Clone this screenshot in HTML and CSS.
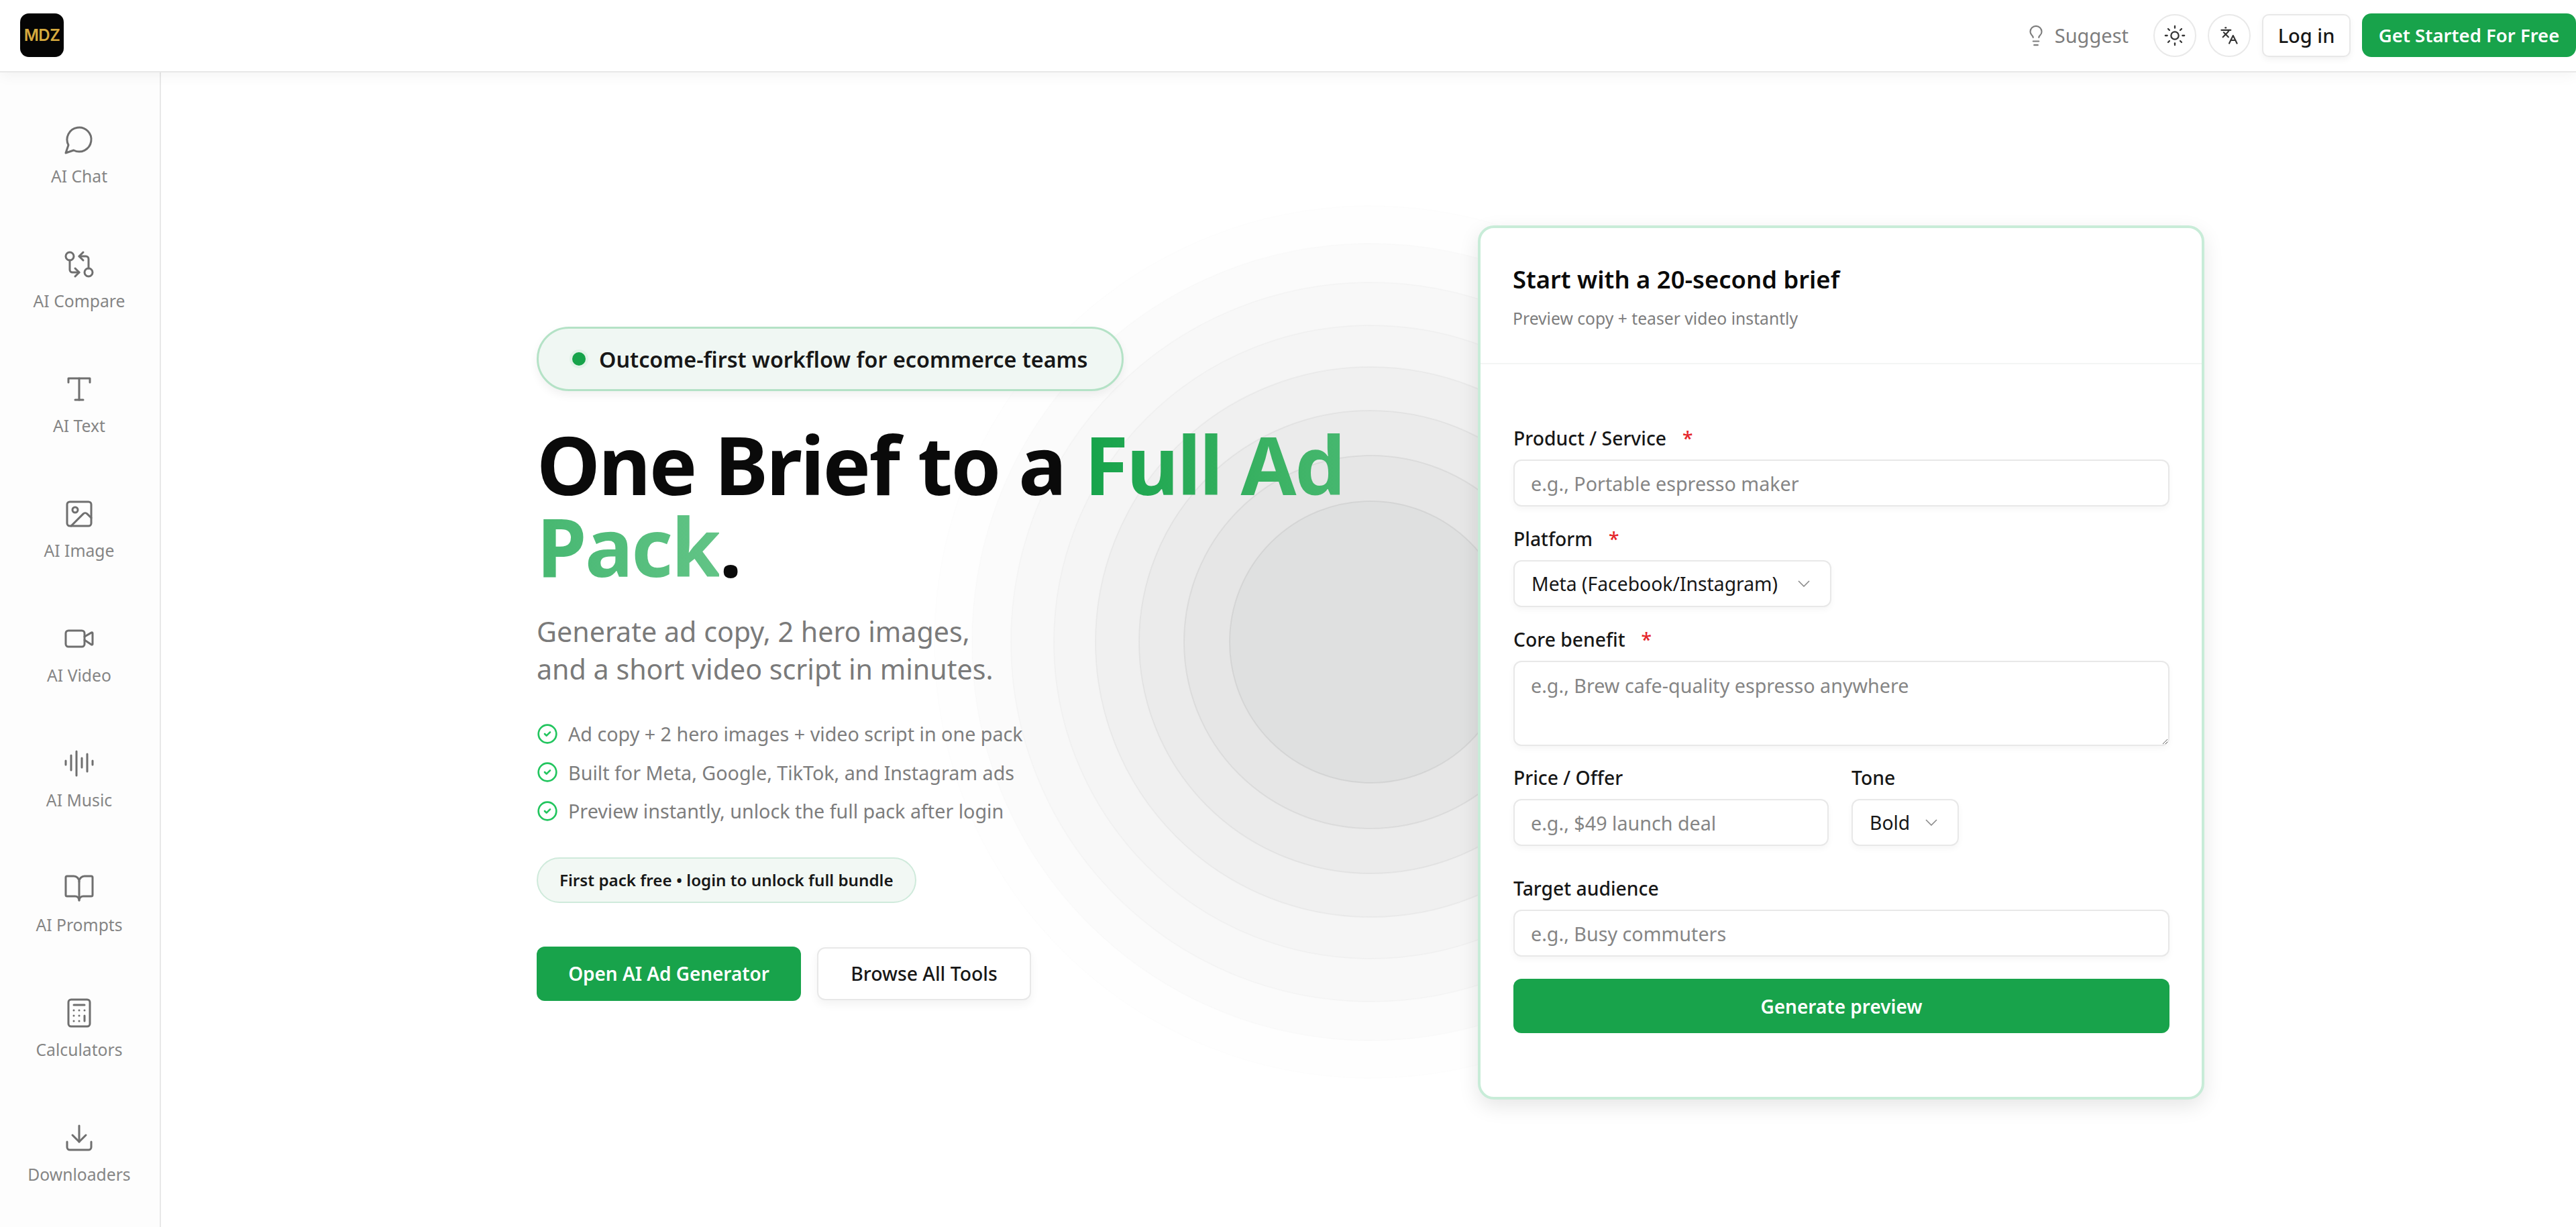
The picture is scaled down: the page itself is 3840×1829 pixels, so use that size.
FILE: index.html
```html
<!DOCTYPE html>
<html lang="en">
<head>
<meta charset="utf-8">
<title>One Brief to a Full Ad Pack</title>
<link rel="stylesheet" href="styles.css">
</head>
<body>
<header class="topbar">
  <div class="logo">MDZ</div>
  <div class="top-actions">
    <a class="suggest">
      <svg class="ic ic-bulb" viewBox="0 0 24 24"><path d="M15 14c.2-1 .7-1.7 1.5-2.5 1-.9 1.5-2.2 1.5-3.5A6 6 0 0 0 6 8c0 1 .2 2.2 1.5 3.5.7.7 1.3 1.5 1.5 2.5"/><path d="M9 18h6"/><path d="M10 22h4"/></svg>
      <span>Suggest</span>
    </a>
    <button class="round">
      <svg class="ic ic-sun" viewBox="0 0 24 24"><circle cx="12" cy="12" r="4"/><path d="M12 2v2"/><path d="M12 20v2"/><path d="m4.93 4.93 1.41 1.41"/><path d="m17.66 17.66 1.41 1.41"/><path d="M2 12h2"/><path d="M20 12h2"/><path d="m6.34 17.66-1.41 1.41"/><path d="m19.07 4.93-1.41 1.41"/></svg>
    </button>
    <button class="round">
      <svg class="ic ic-lang" viewBox="0 0 24 24"><path d="m5 8 6 6"/><path d="m4 14 6-6 2-3"/><path d="M2 5h12"/><path d="M7 2h1"/><path d="m22 22-5-10-5 10"/><path d="M14 18h6"/></svg>
    </button>
    <button class="btn-login">Log in</button>
    <button class="btn-start">Get Started For Free</button>
  </div>
</header>

<div class="shell">
  <nav class="sidebar">
    <a class="nav-item"><svg class="ic" viewBox="0 0 24 24"><path d="M7.9 20A9 9 0 1 0 4 16.1L2 22Z"/></svg><span>AI Chat</span></a>
    <a class="nav-item"><svg class="ic" viewBox="0 0 24 24"><circle cx="5" cy="6" r="3"/><path d="M12 6h5a2 2 0 0 1 2 2v7"/><path d="m15 9-3-3 3-3"/><circle cx="19" cy="18" r="3"/><path d="M12 18H7a2 2 0 0 1-2-2V9"/><path d="m9 15 3 3-3 3"/></svg><span>AI Compare</span></a>
    <a class="nav-item"><svg class="ic" viewBox="0 0 24 24"><path d="M4 7V4h16v3"/><path d="M9 20h6"/><path d="M12 4v16"/></svg><span>AI Text</span></a>
    <a class="nav-item"><svg class="ic" viewBox="0 0 24 24"><rect x="3" y="3" width="18" height="18" rx="2"/><circle cx="9" cy="9" r="2"/><path d="m21 15-3.086-3.086a2 2 0 0 0-2.828 0L6 21"/></svg><span>AI Image</span></a>
    <a class="nav-item"><svg class="ic" viewBox="0 0 24 24"><path d="m16 13 5.223 3.482a.5.5 0 0 0 .777-.416V7.87a.5.5 0 0 0-.752-.432L16 10.5"/><rect x="2" y="6" width="14" height="12" rx="2"/></svg><span>AI Video</span></a>
    <a class="nav-item"><svg class="ic" viewBox="0 0 24 24"><path d="M2 10v3"/><path d="M6 6v11"/><path d="M10 3v18"/><path d="M14 8v7"/><path d="M18 5v13"/><path d="M22 10v3"/></svg><span>AI Music</span></a>
    <a class="nav-item"><svg class="ic" viewBox="0 0 24 24"><path d="M12 7v14"/><path d="M3 18a1 1 0 0 1-1-1V4a1 1 0 0 1 1-1h5a4 4 0 0 1 4 4 4 4 0 0 1 4-4h5a1 1 0 0 1 1 1v13a1 1 0 0 1-1 1h-6a3 3 0 0 0-3 3 3 3 0 0 0-3-3z"/></svg><span>AI Prompts</span></a>
    <a class="nav-item"><svg class="ic" viewBox="0 0 24 24"><rect x="4" y="2" width="16" height="20" rx="2"/><path d="M8 6h8"/><path d="M16 14v4"/><path d="M16 10h.01"/><path d="M12 10h.01"/><path d="M8 10h.01"/><path d="M12 14h.01"/><path d="M8 14h.01"/><path d="M12 18h.01"/><path d="M8 18h.01"/></svg><span>Calculators</span></a>
    <a class="nav-item"><svg class="ic" viewBox="0 0 24 24"><path d="M21 15v4a2 2 0 0 1-2 2H5a2 2 0 0 1-2-2v-4"/><path d="m7 10 5 5 5-5"/><path d="M12 15V3"/></svg><span>Downloaders</span></a>
  </nav>

  <main class="main">
    <svg class="rings" viewBox="0 0 1320 1320" aria-hidden="true">
      <circle cx="660" cy="660" r="650" class="r8"/>
      <circle cx="660" cy="660" r="594" class="r7"/>
      <circle cx="660" cy="660" r="536" class="r6"/>
      <circle cx="660" cy="660" r="472" class="r5"/>
      <circle cx="660" cy="660" r="410" class="r4"/>
      <circle cx="660" cy="660" r="345" class="r3"/>
      <circle cx="660" cy="660" r="278" class="r2"/>
      <circle cx="660" cy="660" r="210" class="r1"/>
    </svg>

    <section class="hero">
      <div class="pill"><i class="dot"></i><span>Outcome-first workflow for ecommerce teams</span></div>
      <h1>One Brief to a <span class="grad">Full Ad Pack</span>.</h1>
      <p class="sub">Generate ad copy, 2 hero images,<br>and a short video script in minutes.</p>
      <ul class="checks">
        <li><svg class="ic ic-check" viewBox="0 0 24 24"><circle cx="12" cy="12" r="10"/><path d="m9 12 2 2 4-4"/></svg>Ad copy + 2 hero images + video script in one pack</li>
        <li><svg class="ic ic-check" viewBox="0 0 24 24"><circle cx="12" cy="12" r="10"/><path d="m9 12 2 2 4-4"/></svg>Built for Meta, Google, TikTok, and Instagram ads</li>
        <li><svg class="ic ic-check" viewBox="0 0 24 24"><circle cx="12" cy="12" r="10"/><path d="m9 12 2 2 4-4"/></svg>Preview instantly, unlock the full pack after login</li>
      </ul>
      <div class="chip">First pack free • login to unlock full bundle</div>
      <div class="cta">
        <button class="btn-primary">Open AI Ad Generator</button>
        <button class="btn-ghost">Browse All Tools</button>
      </div>
    </section>

    <form class="card">
      <div class="card-head">
        <h2>Start with a 20-second brief</h2>
        <p>Preview copy + teaser video instantly</p>
      </div>
      <div class="card-body">
        <label class="lbl">Product / Service<em>*</em></label>
        <input class="field" placeholder="e.g., Portable espresso maker">
        <label class="lbl lbl-next">Platform<em>*</em></label>
        <div class="select select-platform"><span>Meta (Facebook/Instagram)</span><svg class="chev" viewBox="0 0 18 10"><path d="M1 1l8 8 8-8"/></svg></div>
        <label class="lbl lbl-next">Core benefit<em>*</em></label>
        <textarea class="field area" placeholder="e.g., Brew cafe-quality espresso anywhere"></textarea>
        <div class="split">
          <div class="col-price">
            <label class="lbl">Price / Offer</label>
            <input class="field" placeholder="e.g., $49 launch deal">
          </div>
          <div class="col-tone">
            <label class="lbl">Tone</label>
            <div class="select select-tone"><span>Bold</span><svg class="chev" viewBox="0 0 18 10"><path d="M1 1l8 8 8-8"/></svg></div>
          </div>
        </div>
        <label class="lbl lbl-audience">Target audience</label>
        <input class="field" placeholder="e.g., Busy commuters">
        <button type="button" class="btn-generate">Generate preview</button>
      </div>
    </form>
  </main>
</div>
</body>
</html>
```
FILE: styles.css
```css
* { box-sizing: border-box; }
html, body { margin: 0; height: 100%; }
body {
  font-family: "Noto Sans", sans-serif;
  color: #0a0a0a;
  background: #fff;
  overflow: hidden;
}
button { font-family: inherit; cursor: pointer; }

.ic { fill: none; stroke: currentColor; stroke-width: 1.5; stroke-linecap: round; stroke-linejoin: round; flex: none; }

/* Top bar */
.topbar {
  position: relative;
  z-index: 3;
  height: 108px;
  display: flex;
  align-items: center;
  justify-content: space-between;
  padding-left: 30px;
  background: #fff;
  border-bottom: 2px solid #e8e8e8;
  box-shadow: 0 4px 20px rgba(0, 0, 0, .05);
}
.logo {
  width: 65px;
  height: 65px;
  margin-top: -1px;
  display: flex;
  align-items: center;
  justify-content: center;
  border-radius: 13px;
  background: #050505;
  color: #d6aa3e;
  font-family: "Inter", sans-serif;
  font-size: 24px;
  font-weight: 600;
  letter-spacing: -.5px;
}
.top-actions { display: flex; align-items: center; margin-top: -1px; }
.suggest {
  display: flex;
  align-items: center;
  gap: 11px;
  margin-right: 37px;
  color: #7d7d7d;
  font-size: 29px;
}
.ic-bulb { width: 34px; height: 34px; }
.round {
  width: 64px;
  height: 64px;
  margin-right: 17px;
  padding: 0;
  display: flex;
  align-items: center;
  justify-content: center;
  border: 2px solid #e9e9e9;
  border-radius: 50%;
  background: #fff;
  color: #333;
}
.ic-sun { width: 34px; height: 34px; stroke-width: 1.6; }
.ic-lang { width: 28px; height: 28px; stroke-width: 1.8; }
.btn-login {
  width: 132px;
  height: 64px;
  margin-right: 17px;
  padding: 0;
  border: 2px solid #e8e8e8;
  border-radius: 10px;
  background: #fff;
  color: #171717;
  font-size: 29px;
  font-weight: 500;
  box-shadow: 0 4px 10px rgba(0, 0, 0, .05);
}
.btn-start {
  width: 319px;
  height: 65px;
  padding: 0;
  border: 0;
  border-radius: 14px;
  background: #18a34b;
  color: #fff;
  font-size: 27.5px;
  font-weight: 600;
}

/* Shell */
.shell { display: flex; height: calc(100% - 108px); }
.sidebar {
  width: 240px;
  flex: none;
  display: flex;
  flex-direction: column;
  gap: 91px;
  padding: 76px 2px 0 0;
  background: #fdfdfd;
  border-right: 2px solid #e8e8e8;
}
.nav-item {
  height: 95px;
  display: flex;
  flex-direction: column;
  align-items: center;
  gap: 14px;
  color: #6f6f6f;
  font-size: 24.7px;
  line-height: 33px;
}
.nav-item .ic { width: 48px; height: 48px; }
.nav-item span { color: #858585; }

/* Main */
.main {
  position: relative;
  flex: 1;
  display: flex;
  align-items: flex-start;
  padding: 228px 0 0 560px;
  overflow: hidden;
}
.rings {
  position: absolute;
  left: 1143px;
  top: 189px;
  width: 1320px;
  height: 1320px;
}
.rings circle { stroke-width: 2; }
.r8 { fill: #fefefe; stroke: rgba(0, 0, 0, .008); }
.r7 { fill: #fbfbfb; stroke: rgba(0, 0, 0, .012); }
.r6 { fill: #f8f8f8; stroke: rgba(0, 0, 0, .018); }
.r5 { fill: #f5f5f5; stroke: rgba(0, 0, 0, .025); }
.r4 { fill: #f0f0f0; stroke: rgba(0, 0, 0, .035); }
.r3 { fill: #ebebeb; stroke: rgba(0, 0, 0, .045); }
.r2 { fill: #e6e6e6; stroke: rgba(0, 0, 0, .055); }
.r1 { fill: #dfe0e0; stroke: rgba(0, 0, 0, .06); }

/* Hero */
.hero {
  position: relative;
  width: 1403px;
  flex: none;
  padding: 151px 80px 0 0;
}
.pill {
  display: inline-flex;
  align-items: center;
  gap: 20px;
  height: 96px;
  padding: 0 50px;
  border: 3px solid #b4e2c6;
  border-radius: 48px;
  background: #f0f7f3;
  color: #171717;
  font-size: 32.3px;
  font-weight: 600;
  box-shadow: 0 6px 14px rgba(0, 0, 0, .06);
}
.dot {
  width: 20px;
  height: 20px;
  border-radius: 50%;
  background: #16a34a;
  box-shadow: 0 0 0 4px rgba(22, 163, 74, .06);
}
h1 {
  margin: 48px 0 0;
  font-size: 120px;
  line-height: 122px;
  font-weight: 700;
  letter-spacing: -.022em;
  color: #0a0a0a;
}
.grad {
  background: linear-gradient(90deg, #16a34a 0%, #3db365 45%, #4ebb78 70%, #62c486 100%);
  -webkit-background-clip: text;
  background-clip: text;
  color: transparent;
}
.sub {
  margin: 38px 0 0;
  font-size: 41.2px;
  line-height: 56px;
  color: #7a7a7a;
}
.checks { list-style: none; margin: 45px 0 0; padding: 0; display: flex; flex-direction: column; gap: 10px; }
.checks li {
  height: 47.6px;
  display: flex;
  align-items: center;
  gap: 15px;
  font-size: 28.7px;
  color: #7d7d7d;
}
.ic-check { width: 32px; height: 32px; stroke-width: 2; color: #22c55e; }
.chip {
  display: inline-flex;
  align-items: center;
  height: 68px;
  margin-top: 45px;
  padding: 0 32px;
  border: 2px solid #cfeadb;
  border-radius: 34px;
  background: #f2f8f4;
  color: #171717;
  font-size: 24.2px;
  font-weight: 600;
}
.cta { display: flex; align-items: center; gap: 24px; margin-top: 65px; }
.btn-primary {
  width: 394px;
  height: 81px;
  padding: 0;
  border: 0;
  border-radius: 12px;
  background: #18a34b;
  color: #fff;
  font-size: 27.9px;
  font-weight: 600;
}
.btn-ghost {
  width: 319px;
  height: 79px;
  padding: 0;
  border: 2px solid #e8e8e8;
  border-radius: 12px;
  background: #fff;
  color: #171717;
  font-size: 28.4px;
  font-weight: 500;
  box-shadow: 0 6px 14px rgba(0, 0, 0, .05);
}

/* Card */
.card {
  position: relative;
  width: 1083px;
  height: 1303px;
  flex: none;
  border: 4px solid #c8ecd8;
  border-radius: 24px;
  background: #fff;
  box-shadow: 0 10px 30px rgba(0, 0, 0, .1);
}
.card-head {
  height: 203px;
  padding: 50px 48px 0;
  border-bottom: 2px solid #f3f5f4;
}
.card-head h2 { margin: 0; font-size: 36.4px; line-height: 52px; font-weight: 600; color: #0a0a0a; }
.card-head p { margin: 16px 0 0; font-size: 24.7px; line-height: 33px; color: #7d7d7d; }
.card-body { padding: 90px 48px 0 49px; display: flex; flex-direction: column; align-items: stretch; }
.lbl { display: block; height: 40px; margin-bottom: 12px; font-size: 28.3px; line-height: 40px; font-weight: 500; color: #171717; }
.lbl em { margin-left: 24px; color: #e5262b; font-style: normal; }
.lbl-next { margin-top: 28px; }
.field {
  display: block;
  width: 100%;
  height: 70px;
  padding: 0 24px;
  border: 2px solid #e8e8e8;
  border-radius: 12px;
  background: #fff;
  font-family: inherit;
  font-size: 28.7px;
  color: #171717;
  outline: none;
  box-shadow: 0 4px 10px rgba(0, 0, 0, .04);
}
.field::placeholder { color: #858585; opacity: 1; }
.area { height: 127px; padding-top: 15px; padding-bottom: 0; line-height: 40px; resize: vertical; }
.select {
  height: 70px;
  display: flex;
  align-items: center;
  justify-content: space-between;
  padding: 0 30px 0 25px;
  border: 2px solid #e8e8e8;
  border-radius: 12px;
  background: #fff;
  font-size: 28.3px;
  color: #171717;
  box-shadow: 0 4px 10px rgba(0, 0, 0, .04);
}
.select-platform { width: 474px; }
.select-tone { width: 160px; }
.chev { width: 18px; height: 10px; fill: none; stroke: #8a8a8a; stroke-width: 1.6; flex: none; }
.split { display: flex; gap: 34px; margin-top: 27px; }
.col-price { width: 470px; }
.col-tone { width: 160px; }
.lbl-audience { margin-top: 43px; }
.btn-generate {
  height: 81px;
  margin-top: 33px;
  padding: 0;
  border: 0;
  border-radius: 12px;
  background: #18a34b;
  color: #fff;
  font-size: 28px;
  font-weight: 600;
}
```
